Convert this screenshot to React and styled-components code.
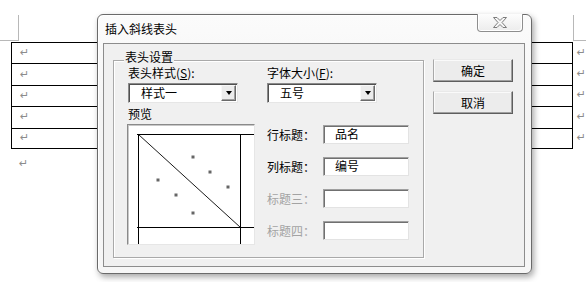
import React from "react";
import styled, { createGlobalStyle } from "styled-components";

const Global = createGlobalStyle`
  html, body { margin: 0; padding: 0; background: #ffffff; }
  body { font-family: "Noto Sans CJK SC", "Liberation Sans", sans-serif; font-size: 12px; color: #000; }
  * { box-sizing: border-box; }
`;

const Page = styled.div`
  position: relative;
  width: 586px;
  height: 282px;
  overflow: hidden;
  background: #fff;
`;

const Doc = styled.div`
  display: flex;
  flex-direction: column;
`;

const MarginRow = styled.div`
  display: flex;
  justify-content: space-between;
  height: 42px;
`;

const Corner = styled.div`
  margin-top: 15px;
  height: 26px;
  width: ${(p) => p.$w}px;
  border-bottom: 1px solid #b8b8b8;
  ${(p) => (p.$side === "left" ? "border-right: 1px solid #b8b8b8;" : "border-left: 1px solid #b8b8b8;")}
`;

const Table = styled.div`
  display: flex;
  flex-direction: column;
  margin-left: 11px;
`;

const Row = styled.div`
  display: flex;
  align-items: center;
`;

const RowCells = styled.div`
  width: 567px;
  height: 21.4px;
  border: 1px solid #000;
  border-bottom: ${(p) => (p.$last ? "1px solid #000" : "none")};
  display: flex;
  align-items: center;
  padding-left: 8px;
`;

const Mark = styled.span`
  font-family: "DejaVu Sans", sans-serif;
  font-size: 11px;
  line-height: 12px;
  color: #8c8c8c;
`;

const EndMark = styled(Mark)`
  margin-left: 4px;
`;

const Trailing = styled.div`
  padding-left: 19px;
  padding-top: 6px;
  line-height: 14px;
`;

/* ---------- dialog ---------- */

const Dialog = styled.div`
  position: absolute;
  left: 97px;
  top: 14px;
  width: 435px;
  height: 260px;
  border: 1px solid #6a6a6a;
  border-radius: 6px;
  background: linear-gradient(#fbfbfb, #f4f4f4 40%, #f6f6f6);
  box-shadow: 2px 3px 6px rgba(0, 0, 0, 0.35), inset 1px 1px 0 #ffffff;
  display: flex;
  flex-direction: column;
  padding: 0 6px 6px 5px;
`;

const TitleBar = styled.div`
  height: 28px;
  display: flex;
  justify-content: space-between;
  align-items: flex-start;
`;

const Title = styled.div`
  padding-left: 2px;
  line-height: 28px;
  font-size: 12px;
  color: #000;
`;

const CloseButton = styled.div`
  margin-top: -1px;
  margin-right: 2px;
  width: 46px;
  height: 18px;
  border: 1px solid #8e8e8e;
  border-top: none;
  border-radius: 0 0 4px 4px;
  background: linear-gradient(#fdfdfd, #ececec);
  box-shadow: inset 1px 0 0 #fff, inset -1px -1px 0 #fff;
  display: flex;
  align-items: center;
  justify-content: center;
`;

const Client = styled.div`
  flex: 1;
  border: 1px solid #8c8c8c;
  background: #f0f0f0;
  display: flex;
  align-items: flex-start;
  padding: 16px 0 0 9px;
`;

const GroupBox = styled.div`
  position: relative;
  width: 311px;
  height: 198px;
  border: 1px solid #a9a9a9;
  box-shadow: 1px 1px 0 #fff, inset 1px 1px 0 #fff;
  display: flex;
  padding: 5px 0 0 14px;
`;

const Legend = styled.div`
  position: absolute;
  top: -11px;
  left: 10px;
  padding: 0 1px;
  line-height: 14px;
  height: 14px;
  background: linear-gradient(transparent 0 9px, #f0f0f0 9px);
`;

const Column = styled.div`
  display: flex;
  flex-direction: column;
  width: ${(p) => p.$w}px;
`;

const FieldLabel = styled.div`
  line-height: 14px;
  height: 14px;
  white-space: nowrap;
  margin-top: ${(p) => p.$mt || 0}px;
`;

const Select = styled.div`
  margin-top: 3px;
  width: 110px;
  height: 20px;
  background: #fff;
  border: 1px solid;
  border-color: #8a8a8a #e6e6e6 #e6e6e6 #8a8a8a;
  box-shadow: inset 1px 1px 0 #505050;
  display: flex;
  align-items: center;
  justify-content: space-between;
  padding: 0 1px 0 12px;
  line-height: 16px;
`;

const DropButton = styled.div`
  width: 15px;
  height: 16px;
  background: #ececec;
  border: 1px solid;
  border-color: #f8f8f8 #6a6a6a #6a6a6a #f8f8f8;
  box-shadow: inset -1px -1px 0 #a0a0a0;
  display: flex;
  align-items: center;
  justify-content: center;
`;

const Arrow = styled.div`
  width: 0;
  height: 0;
  border-left: 3.5px solid transparent;
  border-right: 3.5px solid transparent;
  border-top: 4px solid #000;
`;

const Preview = styled.div`
  margin-top: 3px;
  margin-left: -1px;
  width: 128px;
  height: 121px;
  background: #fff;
  border: 1px solid;
  border-color: #8a8a8a #e6e6e6 #e6e6e6 #8a8a8a;
  box-shadow: inset 1px 1px 0 #c8c8c8;
  display: flex;
`;

const TitleFields = styled.div`
  margin-top: 22px;
  display: flex;
  flex-direction: column;
  gap: 13px;
`;

const FieldRow = styled.div`
  display: flex;
  align-items: center;
`;

const RowLabel = styled.div`
  width: 56px;
  line-height: 19px;
  color: ${(p) => (p.$disabled ? "#a3a3a3" : "#000")};
  white-space: nowrap;
`;

const TextInput = styled.div`
  width: 86px;
  height: 19px;
  background: #fff;
  border: 1px solid;
  border-color: #a0a0a0 #e3e3e3 #e3e3e3 #a0a0a0;
  box-shadow: inset 1px 1px 0 #707070;
  padding-left: 11px;
  line-height: 16px;
`;

const Buttons = styled.div`
  margin-left: 9px;
  margin-top: -1px;
  display: flex;
  flex-direction: column;
  gap: 9px;
`;

const Button = styled.div`
  width: 80px;
  height: 23px;
  background: #ececec;
  border: 1px solid;
  border-color: #e9e9e9 #5e5e5e #5e5e5e #a9a9a9;
  box-shadow: inset -1px -1px 0 #a0a0a0, inset 1px 1px 0 #fafafa;
  display: flex;
  align-items: center;
  justify-content: center;
  font-size: 12px;
`;

const CloseIcon = () => (
  <svg width="14" height="11" viewBox="0 0 14 11">
    <polygon
      points="0.5,0.5 4,0.5 7,3.5 10,0.5 13.5,0.5 9,5.5 13.5,10.5 10,10.5 7,7.5 4,10.5 0.5,10.5 5,5.5"
      fill="#f6f6f6"
      stroke="#7c7c7c"
      strokeWidth="1"
      strokeLinejoin="round"
    />
  </svg>
);

const PreviewDrawing = () => {
  const dots = [
    [65, 32],
    [82, 47],
    [100, 62],
    [30, 55],
    [48, 70],
    [65, 88],
  ];
  return (
    <svg width="126" height="119" viewBox="0 0 126 119">
      <line x1="9" y1="9.5" x2="126" y2="9.5" stroke="#000" />
      <line x1="9" y1="102.5" x2="126" y2="102.5" stroke="#000" />
      <line x1="10.5" y1="9" x2="10.5" y2="119" stroke="#000" />
      <line x1="112.5" y1="9" x2="112.5" y2="119" stroke="#000" />
      <line x1="10.5" y1="9.5" x2="112.5" y2="102.5" stroke="#000" strokeWidth="0.9" />
      {dots.map(([x, y], i) => (
        <rect key={i} x={x - 1.5} y={y - 1.5} width="3" height="3" fill="#666" />
      ))}
    </svg>
  );
};

const rows = [0, 1, 2, 3, 4];

export default function App() {
  return (
    <Page>
      <Global />
      <Doc>
        <MarginRow>
          <Corner $side="left" $w={19} />
          <Corner $side="right" $w={13} />
        </MarginRow>
        <Table>
          {rows.map((r) => (
            <Row key={r}>
              <RowCells $last={r === rows.length - 1}>
                <Mark>↵</Mark>
              </RowCells>
              <EndMark>↵</EndMark>
            </Row>
          ))}
        </Table>
        <Trailing>
          <Mark>↵</Mark>
        </Trailing>
      </Doc>

      <Dialog>
        <TitleBar>
          <Title>插入斜线表头</Title>
          <CloseButton>
            <CloseIcon />
          </CloseButton>
        </TitleBar>
        <Client>
          <GroupBox>
            <Legend>表头设置</Legend>
            <Column $w={139}>
              <FieldLabel>
                表头样式(<u>S</u>):
              </FieldLabel>
              <Select>
                <span>样式一</span>
                <DropButton>
                  <Arrow />
                </DropButton>
              </Select>
              <FieldLabel $mt={4}>预览</FieldLabel>
              <Preview>
                <PreviewDrawing />
              </Preview>
            </Column>
            <Column $w={150}>
              <FieldLabel>
                字体大小(<u>F</u>):
              </FieldLabel>
              <Select>
                <span>五号</span>
                <DropButton>
                  <Arrow />
                </DropButton>
              </Select>
              <TitleFields>
                <FieldRow>
                  <RowLabel>行标题：</RowLabel>
                  <TextInput>品名</TextInput>
                </FieldRow>
                <FieldRow>
                  <RowLabel>列标题：</RowLabel>
                  <TextInput>编号</TextInput>
                </FieldRow>
                <FieldRow>
                  <RowLabel $disabled>标题三：</RowLabel>
                  <TextInput />
                </FieldRow>
                <FieldRow>
                  <RowLabel $disabled>标题四：</RowLabel>
                  <TextInput />
                </FieldRow>
              </TitleFields>
            </Column>
          </GroupBox>
          <Buttons>
            <Button>确定</Button>
            <Button>取消</Button>
          </Buttons>
        </Client>
      </Dialog>
    </Page>
  );
}
